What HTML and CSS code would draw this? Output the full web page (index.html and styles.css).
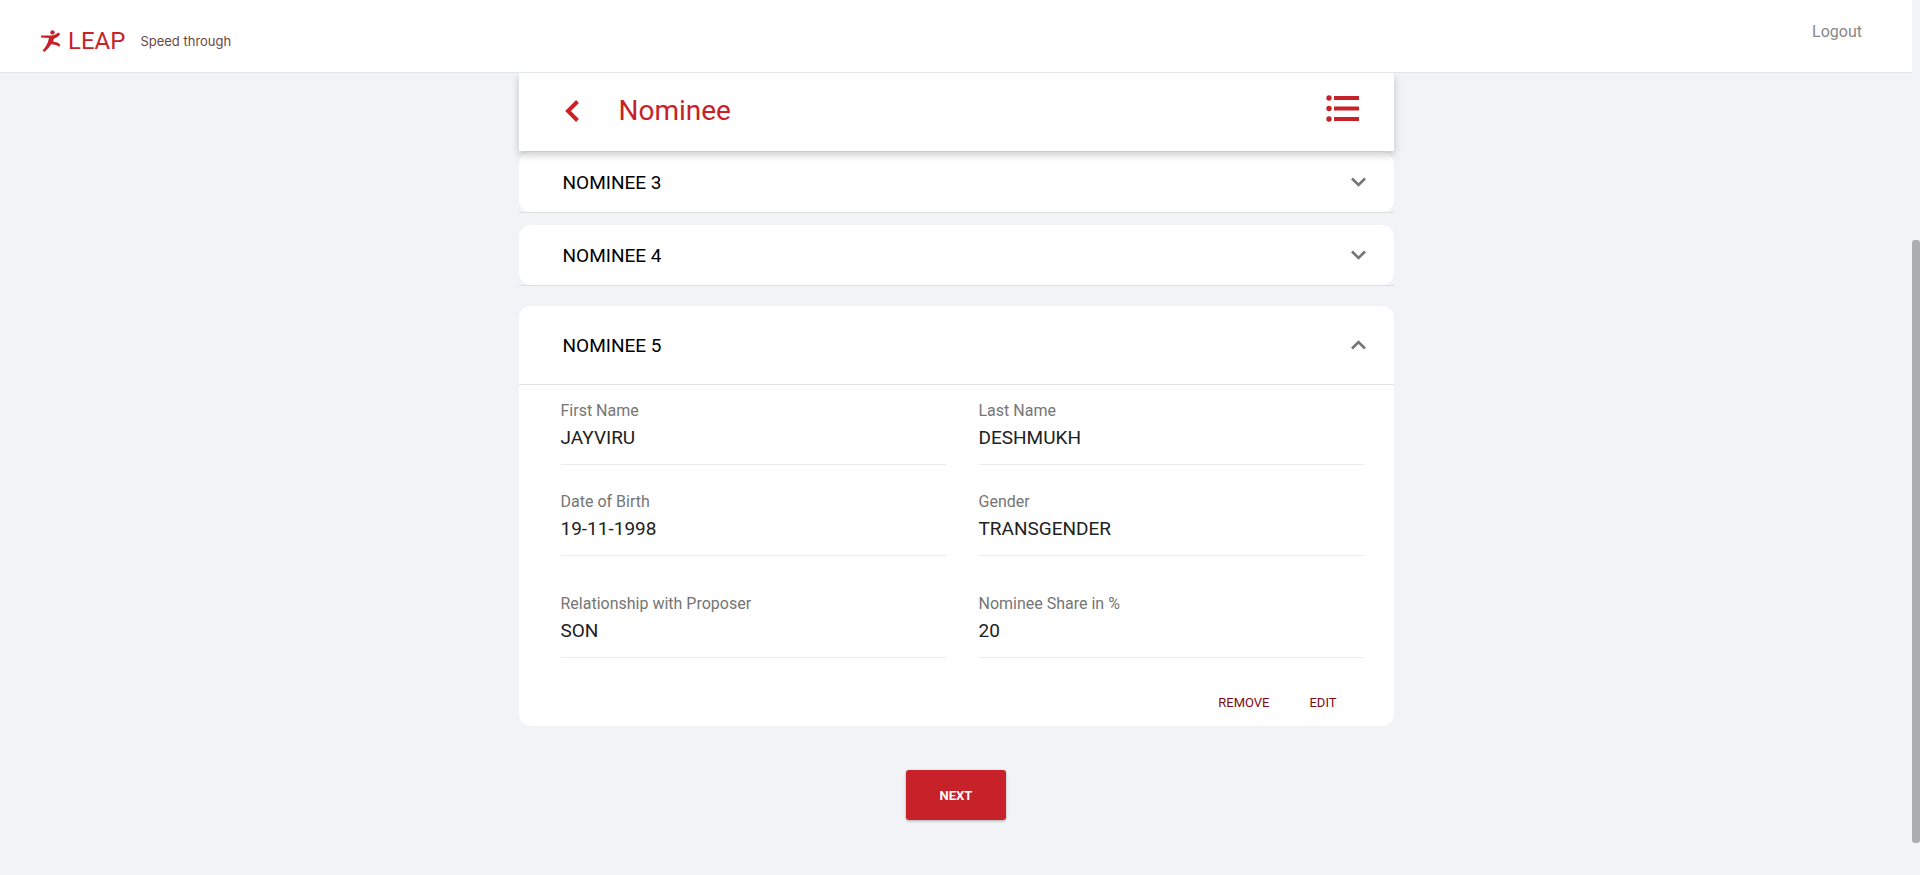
FILE: index.html
```html
<!DOCTYPE html>
<html lang="en">
<head>
<meta charset="utf-8">
<meta name="viewport" content="width=device-width, initial-scale=1">
<title>LEAP - Nominee</title>
<link rel="stylesheet" href="styles.css">
</head>
<body>
<div class="page">
  <header class="topbar">
    <div class="brand">
      <svg class="brand-icon" viewBox="0 0 20 22" aria-hidden="true">
        <circle cx="11.5" cy="2.4" r="2.2"/>
        <path d="M0 5.500L9 5.500Q13.500 6 17.500 2.600L19.200 4.300Q16.500 8 13 8.800L12 11.500Q17 12 19.300 14.800L18.500 16.800Q14.500 14 10.200 14.200Q8 18 3.500 22L1.500 20.500Q6.500 15.500 8 8L0 7.500Z"/>
      </svg>
      <span class="brand-name">LEAP</span>
      <span class="brand-tag">Speed through</span>
    </div>
    <a class="logout" href="#">Logout</a>
  </header>
  <main class="content">
    <div class="titlebar">
      <button class="icon-btn" type="button" aria-label="Back">
        <svg class="back-icon" viewBox="0 0 14 22"><path d="M12.500 1.500L3 11L12.500 20.500"/></svg>
      </button>
      <h1 class="title">Nominee</h1>
      <button class="icon-btn menu-btn" type="button" aria-label="Menu">
        <svg class="list-icon" viewBox="0 0 33 27"><circle cx="3" cy="3" r="2.700"/><circle cx="3" cy="13.500" r="2.700"/><circle cx="3" cy="24" r="2.700"/><path d="M8 1h25v4H8zM8 11.500h25v4H8zM8 22h25v4H8z"/></svg>
      </button>
    </div>
    <div class="panel-wrap">
      <button class="panel" type="button">NOMINEE 3
        <svg class="chevron" viewBox="0 0 15 10"><path d="M1 1.500L7.500 8L14 1.500"/></svg>
      </button>
    </div>
    <div class="panel-wrap">
      <button class="panel" type="button">NOMINEE 4
        <svg class="chevron" viewBox="0 0 15 10"><path d="M1 1.500L7.500 8L14 1.500"/></svg>
      </button>
    </div>
    <section class="card">
      <button class="panel panel-open" type="button" aria-expanded="true">NOMINEE 5
        <svg class="chevron" viewBox="0 0 15 10"><path d="M1 8.500L7.500 2L14 8.500"/></svg>
      </button>
      <dl class="fields">
        <div class="field"><dt>First Name</dt><dd>JAYVIRU</dd></div>
        <div class="field"><dt>Last Name</dt><dd>DESHMUKH</dd></div>
        <div class="field"><dt>Date of Birth</dt><dd>19-11-1998</dd></div>
        <div class="field"><dt>Gender</dt><dd>TRANSGENDER</dd></div>
        <div class="field field-last"><dt>Relationship with Proposer</dt><dd>SON</dd></div>
        <div class="field field-last"><dt>Nominee Share in %</dt><dd>20</dd></div>
      </dl>
      <div class="actions">
        <button class="text-btn" type="button">REMOVE</button>
        <button class="text-btn" type="button">EDIT</button>
      </div>
    </section>
    <button class="next" type="button">NEXT</button>
  </main>
</div>
<div class="scroll-track"><div class="scroll-thumb"></div></div>
</body>
</html>
```
FILE: styles.css
```css
* { box-sizing: border-box; }
body {
  margin: 0;
  min-height: 100vh;
  display: flex;
  background: #f1f3f7;
  font-family: Roboto, "Liberation Sans", sans-serif;
  color: #212121;
}
button { font: inherit; border: 0; background: none; padding: 0; cursor: pointer; }
svg { display: block; flex: none; }
.page { flex: 1; min-width: 0; }
.topbar {
  display: flex;
  justify-content: space-between;
  align-items: flex-start;
  height: 73px;
  padding: 22px 50px 0 41px;
  background: #fff;
  border-bottom: 1px solid #e1e4e8;
}
.brand { display: flex; align-items: center; height: 38px; }
.brand-icon { width: 20px; height: 22px; fill: #c72229; }
.brand-name { margin-left: 7px; font-size: 24px; line-height: 36px; color: #c72229; }
.brand-tag { margin-left: 15px; font-family: Inter, sans-serif; font-size: 13px; color: #6b4744; }
.logout { font-size: 16px; line-height: 20px; color: #888; text-decoration: none; }
.content {
  display: flex;
  flex-direction: column;
  width: 100%;
  max-width: 875px;
  margin: 0 auto;
}
.titlebar {
  display: flex;
  align-items: center;
  height: 78px;
  padding: 0 35px 2px 46px;
  background: #fff;
  box-shadow: 0 4px 8px rgba(0, 0, 0, .2);
  clip-path: inset(0 -10px -14px -10px);
  z-index: 1;
}
.back-icon { width: 14px; height: 22px; fill: none; stroke: #c72229; stroke-width: 4; }
.list-icon { width: 33px; height: 27px; fill: #c72229; }
.icon-btn { display: flex; }
.menu-btn { padding-bottom: 6px; }
.title {
  flex: 1;
  margin: 0 0 0 40px;
  font-size: 28px;
  font-weight: 400;
  line-height: 36px;
  color: #c72229;
}
.panel-wrap { margin: 1px 0 12px; border-bottom: 1px solid #dedfe1; }
.panel-wrap + .panel-wrap { margin: 0 0 20px; }
.panel {
  display: flex;
  justify-content: space-between;
  align-items: center;
  width: 100%;
  height: 60px;
  padding: 0 28px 0 44px;
  border-radius: 12px;
  background: #fff;
  font-size: 19px;
  color: #000;
}
.panel-open { height: 79px; border-bottom: 1px solid #e2e2e2; border-radius: 12px 12px 0 0; }
.chevron { width: 15px; height: 10px; fill: none; stroke: #757575; stroke-width: 2.6; }
.card { border-radius: 12px; background: #fff; }
.fields {
  display: grid;
  grid-template-columns: 1fr 1fr;
  column-gap: 33px;
  margin: 0;
  padding: 16px 30px 0 42px;
}
.field { margin-bottom: 27px; padding-bottom: 13px; border-bottom: 1px solid #ebebeb; }
.field-last { margin: 11px 0 0; }
.field dt { font-size: 16px; line-height: 20px; color: #757575; }
.field dd { margin: 4px 0 0; font-size: 19px; line-height: 26px; }
.actions { display: flex; justify-content: flex-end; gap: 40px; padding: 30px 57px 8px; }
.text-btn { font-size: 13px; line-height: 30px; color: #7d0a12; }
.next {
  align-self: center;
  width: 100px;
  height: 50px;
  margin: 44px 0;
  border-radius: 3px;
  background: #c72229;
  box-shadow: 0 1px 3px rgba(0, 0, 0, .3);
  font-size: 13px;
  font-weight: 700;
  color: #fff;
}
.scroll-track { display: grid; grid-template-rows: 240fr 603fr 32fr; width: 8px; }
.scroll-thumb { grid-row: 2; border-radius: 3px; background: #adaeb1; }
```
